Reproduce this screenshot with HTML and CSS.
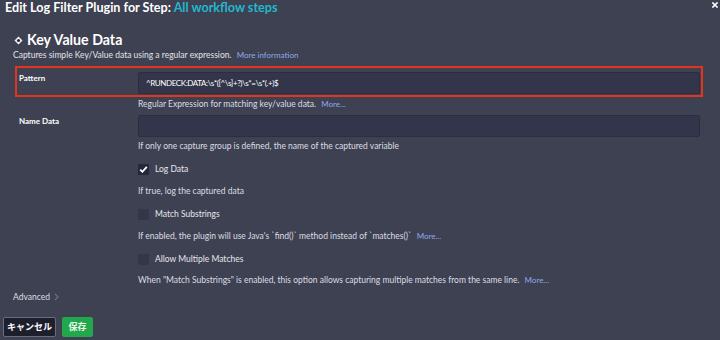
FILE: index.html
```html
<!DOCTYPE html>
<html>
<head>
<meta charset="utf-8">
<link rel="stylesheet" href="styles.css">
</head>
<body>
<div class="modal">
  <div class="header">Edit Log Filter Plugin for Step: <span class="accent">All workflow steps</span></div>
  <svg class="close" width="6" height="6" viewBox="0 0 6 6"><path d="M1 1L5 5M5 1L1 5" stroke="#fff" stroke-width="1.6" stroke-linecap="square"/></svg>
  <div class="plugin-title">
    <svg class="plugin-icon" width="9" height="9" viewBox="0 0 9 9"><path d="M4.5 0.5L8.5 4.5L4.5 8.5L0.5 4.5Z" fill="#f2f2f4"/><circle cx="4.5" cy="4.5" r="1.6" fill="#2a2b38"/></svg>
    <span>Key Value Data</span>
  </div>
  <div class="plugin-desc">Captures simple Key/Value data using a regular expression. <a class="link">More information</a></div>

  <div class="field highlighted">
    <div class="label">Pattern</div>
    <div class="input">^RUNDECK:DATA:\s*([^\s]+?)\s*=\s*(.+)$</div>
  </div>
  <div class="help first">Regular Expression for matching key/value data. <a class="link">More...</a></div>

  <div class="field gap">
    <div class="label">Name Data</div>
    <div class="input"></div>
  </div>
  <div class="help">If only one capture group is defined, the name of the captured variable</div>

  <div class="check-row"><span class="box checked"><svg width="11" height="11" viewBox="0 0 11 11"><path d="M2.2 5.6L4.4 7.8L8.8 2.8" fill="none" stroke="#fff" stroke-width="1.8"/></svg></span><span>Log Data</span></div>
  <div class="help chk">If true, log the captured data</div>

  <div class="check-row"><span class="box"></span><span>Match Substrings</span></div>
  <div class="help chk">If enabled, the plugin will use Java's `find()` method instead of `matches()` <a class="link">More...</a></div>

  <div class="check-row"><span class="box"></span><span>Allow Multiple Matches</span></div>
  <div class="help chk last">When "Match Substrings" is enabled, this option allows capturing multiple matches from the same line. <a class="link">More...</a></div>

  <div class="advanced">Advanced <svg class="chev" width="5" height="8" viewBox="0 0 5 8"><path d="M1 1L4 4L1 7" fill="none" stroke="#6d7083" stroke-width="1.2"/></svg></div>

  <div class="buttons">
    <button class="btn cancel">キャンセル</button>
    <button class="btn save">保存</button>
  </div>
</div>
</body>
</html>
```
FILE: styles.css
```css
html, body {
  margin: 0;
  padding: 0;
}
body {
  width: 720px;
  height: 340px;
  overflow: hidden;
  background: #3e4152;
  color: #dfe0e6;
  font-family: Lato, "Noto Sans", sans-serif;
}
.modal {
  position: relative;
  width: 720px;
  height: 340px;
}
.header {
  height: 16px;
  line-height: 15px;
  padding-left: 5px;
  font-size: 12.6px;
  font-weight: 700;
  color: #ffffff;
}
.accent {
  color: #22b8cc;
}
.close {
  position: absolute;
  top: 2px;
  right: 2px;
}
.plugin-title {
  margin-top: 16px;
  padding-left: 14px;
  height: 16px;
  line-height: 16px;
  display: flex;
  align-items: center;
  gap: 4px;
  font-size: 14.2px;
  font-weight: 700;
  color: #ffffff;
}
.plugin-desc {
  margin-top: 1px;
  padding-left: 13px;
  height: 12px;
  line-height: 12px;
  font-size: 8.5px;
  color: #e2e3e8;
}
.link {
  color: #8ea9e8;
  margin-left: 3px;
  font-size: 8px;
}
.field {
  display: grid;
  grid-template-columns: 121px 562px;
  margin-left: 17px;
  width: 684px;
}
.field.highlighted {
  margin-top: 7px;
  padding: 4px 0 1px;
  outline: 2px solid #e3341d;
}
.field.gap {
  margin-top: 5px;
}
.label {
  padding-left: 2px;
  line-height: 12px;
  font-size: 8px;
  font-weight: 700;
  color: #ffffff;
}
.input {
  box-sizing: border-box;
  height: 22px;
  background: #33354a;
  border: 1px solid #2c2e3f;
  border-radius: 2px;
  padding-left: 7px;
  line-height: 20px;
  font-size: 8px;
  letter-spacing: -0.4px;
  color: #ffffff;
}
.help {
  margin-left: 138px;
  margin-top: 3px;
  height: 12px;
  line-height: 12px;
  font-size: 8.5px;
  color: #dcdde3;
}
.help.chk {
  margin-top: 10px;
}
.help.last {
  margin-top: 9px;
}
.check-row {
  margin-left: 138px;
  margin-top: 11px;
  height: 12px;
  display: flex;
  align-items: center;
  gap: 6px;
  font-size: 8.5px;
  color: #e6e7ec;
}
.box {
  width: 11px;
  height: 11px;
  background: #34364a;
  border-radius: 1px;
  display: flex;
}
.box.checked {
  background: #25273a;
}
.advanced {
  margin-top: 5px;
  padding-left: 13px;
  height: 12px;
  line-height: 12px;
  font-size: 8.5px;
  color: #dcdde3;
  display: flex;
  align-items: center;
  gap: 4px;
}
.buttons {
  margin-top: 14px;
  padding-left: 3px;
  display: flex;
  gap: 6px;
}
.btn {
  height: 20px;
  box-sizing: border-box;
  border-radius: 2px;
  font-family: "Noto Sans CJK JP", sans-serif;
  font-size: 9px;
  font-weight: 700;
  padding: 0;
  line-height: 18px;
}
.cancel {
  width: 53px;
  background: #1e1f2c;
  border: 1px solid #6a6c7a;
  color: #ffffff;
}
.save {
  width: 31px;
  background: #22a84c;
  border: 1px solid #22a84c;
  color: #e9f6ec;
}
```
